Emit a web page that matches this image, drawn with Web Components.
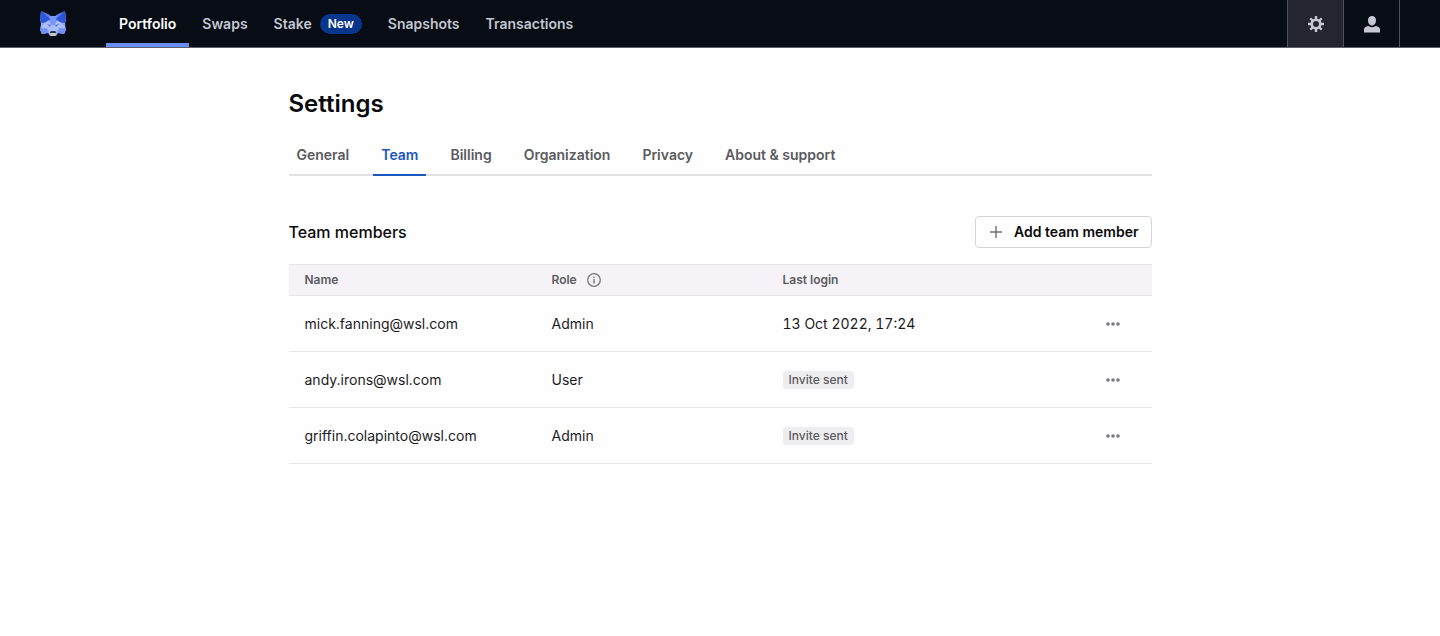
<!DOCTYPE html>
<html lang="en">
<head>
<meta charset="utf-8">
<meta name="viewport" content="width=device-width, initial-scale=1">
<title>Settings</title>
<style>
  body {
    margin: 0;
    background: #fefefe;
    color: #1b1b1f;
    font-family: Inter, "Liberation Sans", sans-serif;
    font-size: 14px;
    line-height: 20px;
  }
</style>
</head>
<body>
<app-header>
  <nav-item href="#portfolio" active>Portfolio</nav-item>
  <nav-item href="#swaps">Swaps</nav-item>
  <nav-item href="#stake" badge="New">Stake</nav-item>
  <nav-item href="#snapshots">Snapshots</nav-item>
  <nav-item href="#transactions">Transactions</nav-item>
</app-header>
<settings-page heading="Settings">
  <tab-bar slot="tabs">
    <tab-item href="#general">General</tab-item>
    <tab-item href="#team" active>Team</tab-item>
    <tab-item href="#billing">Billing</tab-item>
    <tab-item href="#organization">Organization</tab-item>
    <tab-item href="#privacy">Privacy</tab-item>
    <tab-item href="#about">About &amp; support</tab-item>
  </tab-bar>
  <section-header heading="Team members">
    <add-button>Add team member</add-button>
  </section-header>
  <team-table></team-table>
</settings-page>

<script>
function define(name, html, Base = HTMLElement) {
  const template = document.createElement('template');
  template.innerHTML = html;

  customElements.define(name, class extends Base {
    constructor() {
      super();
      this.attachShadow({ mode: 'open' });
      this.shadowRoot.appendChild(template.content.cloneNode(true));
    }
  });
}

// Elements with a heading="" attribute
class HeadingElement extends HTMLElement {
  connectedCallback() {
    this.shadowRoot.querySelector('.heading').textContent = this.getAttribute('heading');
  }
}

// Elements that wrap a link
class LinkElement extends HTMLElement {
  connectedCallback() {
    const link = this.shadowRoot.querySelector('a');
    link.href = this.getAttribute('href');
    if (this.hasAttribute('active')) {
      link.setAttribute('aria-current', 'page');
    }
    const badge = this.getAttribute('badge');
    if (badge) {
      const el = document.createElement('span');
      el.className = 'badge';
      el.textContent = badge;
      link.appendChild(el);
    }
  }
}

define('fox-logo', `
  <style>
    :host { display: block; width: 26px; height: 26px; }
    svg { display: block; }
  </style>
  <svg width="26" height="26" viewBox="0 0 26 26" aria-hidden="true">
    <!-- head -->
    <path fill="#8ea8fb" d="M1 1 9 5h8l8-4 1 7-1 5 1 6-2 4-6-1-2 3h-6l-2-3-6 1-2-4 1-6-1-5z"/>
    <!-- ears -->
    <path fill="#2f55d8" d="M1 0 11 8 8 11 1 12 0 7z"/>
    <path fill="#2f55d8" d="M25 0 15 8l3 3 7 1 1-5z"/>
    <path fill="#5b7ff0" d="m1 0 9 4 2 5zM25 0l-9 4-2 5z"/>
    <!-- forehead and muzzle -->
    <path fill="#7896f5" d="M9 5h8l-2 10h-4z"/>
    <path fill="#a9bdff" d="m9 9 2 6v5l-4-1-6-3 5-5zM17 9l-2 6v5l4-1 6-3-5-5z"/>
    <path fill="#a9bdff" d="M11 14h4l2 6-1 2h-6l-1-2z"/>
    <path fill="#5274df" d="m7 13 4 1-1 2zM19 13l-4 1 1 2z"/>
    <!-- cheeks -->
    <path fill="#7391f4" d="m0 18 7-1 1 5-6 1zM26 18l-7-1-1 5 6 1z"/>
    <path fill="#34343c" d="m10 21 1-1h4l1 1v1h-6z"/>
    <path fill="#cfc3c4" d="M10 22h6l-1 3h-4z"/>
  </svg>
`);

define('nav-item', `
  <style>
    :host { display: flex; color: #c3c7d1; }
    :host([active]) { color: #fff; }
    a {
      display: flex;
      align-items: center;
      gap: 8px;
      box-sizing: border-box;
      padding: 4px 13px 0;
      border-bottom: 4px solid transparent;
      color: inherit;
      font-weight: 600;
      text-decoration: none;
    }
    :host([active]) a { border-bottom-color: #6a8df3; }
    .badge {
      padding: 0 8px;
      border-radius: 10px;
      background: #08368c;
      color: #fff;
      font-size: 12px;
    }
  </style>
  <a><slot></slot></a>
`, LinkElement);

define('app-header', `
  <style>
    :host {
      display: flex;
      height: 47px;
      border-bottom: 1px solid #5d616b;
      background: #080c14;
    }
    fox-logo { align-self: center; margin: 0 40px; }
    nav { display: flex; }
    .actions { display: flex; margin-left: auto; margin-right: 40px; border-right: 1px solid #4c5059; }
    button {
      display: grid;
      place-items: center;
      width: 56px;
      padding: 0;
      border: 0;
      border-left: 1px solid #4c5059;
      background: none;
      color: #c5c8d2;
    }
    button[aria-pressed] { background: #23262f; }
    svg { display: block; }
  </style>
  <fox-logo></fox-logo>
  <nav><slot></slot></nav>
  <div class="actions">
    <button type="button" aria-label="Settings" aria-pressed="true">
      <svg width="16" height="16" viewBox="0 0 16 16" fill="none" stroke="currentColor">
        <circle cx="8" cy="8" r="4.3" stroke-width="2.6"/>
        <path stroke-width="2.4" d="M8 0v3M8 13v3M0 8h3M13 8h3M2.300 2.300l2.200 2.200M11.500 11.500l2.200 2.200M2.300 13.700l2.200-2.200M11.500 4.500l2.200-2.200"/>
      </svg>
    </button>
    <button type="button" aria-label="Account">
      <svg width="16" height="18" viewBox="0 0 16 18" fill="currentColor">
        <path d="M8 1c2.500 0 4 1.700 4 4.200C12 8 10.400 10.500 8 10.500S4 8 4 5.200C4 2.700 5.500 1 8 1zM4.500 11q3.500 2.500 7 0C14.500 11.500 16 12.500 16 14.500V17.500H0V14.500C0 12.500 1.500 11.500 4.500 11z"/>
      </svg>
    </button>
  </div>
`);

define('settings-page', `
  <style>
    :host { display: block; padding: 40px 24px; }
    main { max-width: 863px; margin: 0 auto; }
    h1 { margin: 0 0 16px; color: #0a0a0c; font-size: 24px; font-weight: 600; line-height: 32px; }
  </style>
  <main>
    <h1 class="heading"></h1>
    <slot name="tabs"></slot>
    <slot></slot>
  </main>
`, HeadingElement);

define('tab-bar', `
  <style>
    :host { display: block; margin-bottom: 40px; }
    nav { display: flex; gap: 16px; box-shadow: inset 0 -2px #e3e1e6; }
  </style>
  <nav aria-label="Settings sections"><slot></slot></nav>
`);

define('tab-item', `
  <style>
    :host { display: block; color: #5b5b60; }
    :host([active]) { color: #1c56c0; }
    a {
      display: block;
      padding: 9px 8px;
      border-bottom: 2px solid transparent;
      color: inherit;
      font-weight: 600;
      text-decoration: none;
    }
    :host([active]) a { border-bottom-color: currentColor; }
  </style>
  <a><slot></slot></a>
`, LinkElement);

define('section-header', `
  <style>
    :host { display: flex; align-items: center; justify-content: space-between; margin-bottom: 16px; }
    h2 { margin: 0; color: #0a0a0c; font-size: 16px; font-weight: 500; line-height: 24px; }
  </style>
  <h2 class="heading"></h2>
  <slot></slot>
`, HeadingElement);

define('add-button', `
  <style>
    :host { display: block; }
    button {
      display: flex;
      align-items: center;
      gap: 12px;
      padding: 5px 12px 5px 14px;
      border: 1px solid #d6d4da;
      border-radius: 4px;
      background: #fff;
      color: #0a0a0c;
      font: inherit;
      font-weight: 600;
    }
    svg { display: block; }
  </style>
  <button type="button">
    <svg width="12" height="12" viewBox="0 0 12 12" stroke="#727278" stroke-width="1.500" aria-hidden="true">
      <path d="M6 0v12M0 6h12"/>
    </svg>
    <slot></slot>
  </button>
`);

define('status-badge', `
  <style>
    :host {
      display: block;
      width: fit-content;
      padding: 0 6px;
      border-radius: 3px;
      background: #eeedf0;
      color: #5b5b60;
      font-size: 12px;
      font-weight: 500;
      line-height: 18px;
    }
  </style>
  <slot></slot>
`);

define('more-button', `
  <style>
    :host { display: block; }
    button { display: block; margin-left: auto; padding: 8px 4px; border: 0; background: none; }
    svg { display: block; fill: #77777c; }
  </style>
  <button type="button" aria-label="More options">
    <svg width="14" height="4" viewBox="0 0 14 4">
      <circle cx="2" cy="2" r="1.800"/>
      <circle cx="7" cy="2" r="1.800"/>
      <circle cx="12" cy="2" r="1.800"/>
    </svg>
  </button>
`);

const members = [
  { email: 'mick.fanning@wsl.com', role: 'Admin', login: '13 Oct 2022, 17:24' },
  { email: 'andy.irons@wsl.com', role: 'User' },
  { email: 'griffin.colapinto@wsl.com', role: 'Admin' }
];

class TeamTable extends HTMLElement {
  connectedCallback() {
    this.shadowRoot.querySelector('tbody').innerHTML = members.map(m => `
      <tr>
        <td>${m.email}</td>
        <td>${m.role}</td>
        <td class="login">${m.login || '<status-badge>Invite sent</status-badge>'}</td>
        <td><more-button></more-button></td>
      </tr>`).join('');
  }
}

define('team-table', `
  <style>
    :host { display: block; }
    table { width: 100%; border-spacing: 0; table-layout: fixed; }
    th, td { padding: 0 16px; text-align: left; border-bottom: 1px solid #e6e5e8; }
    th {
      height: 30px;
      border-top: 1px solid #e6e5e8;
      background: #f5f3f7;
      color: #5b5b60;
      font-size: 12px;
      font-weight: 600;
    }
    td { height: 55px; }
    td:last-child { padding-right: 28px; }
    .login { font-variant-numeric: tabular-nums; }
    .name { width: 215px; }
    .role { width: 199px; }
    .actions { width: 64px; }
    .label { display: flex; align-items: center; gap: 10px; }
    svg { display: block; }
  </style>
  <table>
    <thead>
      <tr>
        <th class="name" scope="col">Name</th>
        <th class="role" scope="col">
          <span class="label">Role
            <svg width="14" height="14" viewBox="0 0 14 14" fill="none" stroke="#77777c" aria-hidden="true">
              <circle cx="7" cy="7" r="6.300" stroke-width="1.300"/>
              <path stroke-width="1.400" d="M7 6v4.500M7 3.500v1.400"/>
            </svg>
          </span>
        </th>
        <th scope="col">Last login</th>
        <th class="actions" aria-label="Actions"></th>
      </tr>
    </thead>
    <tbody></tbody>
  </table>
`, TeamTable);
</script>
</body>
</html>
